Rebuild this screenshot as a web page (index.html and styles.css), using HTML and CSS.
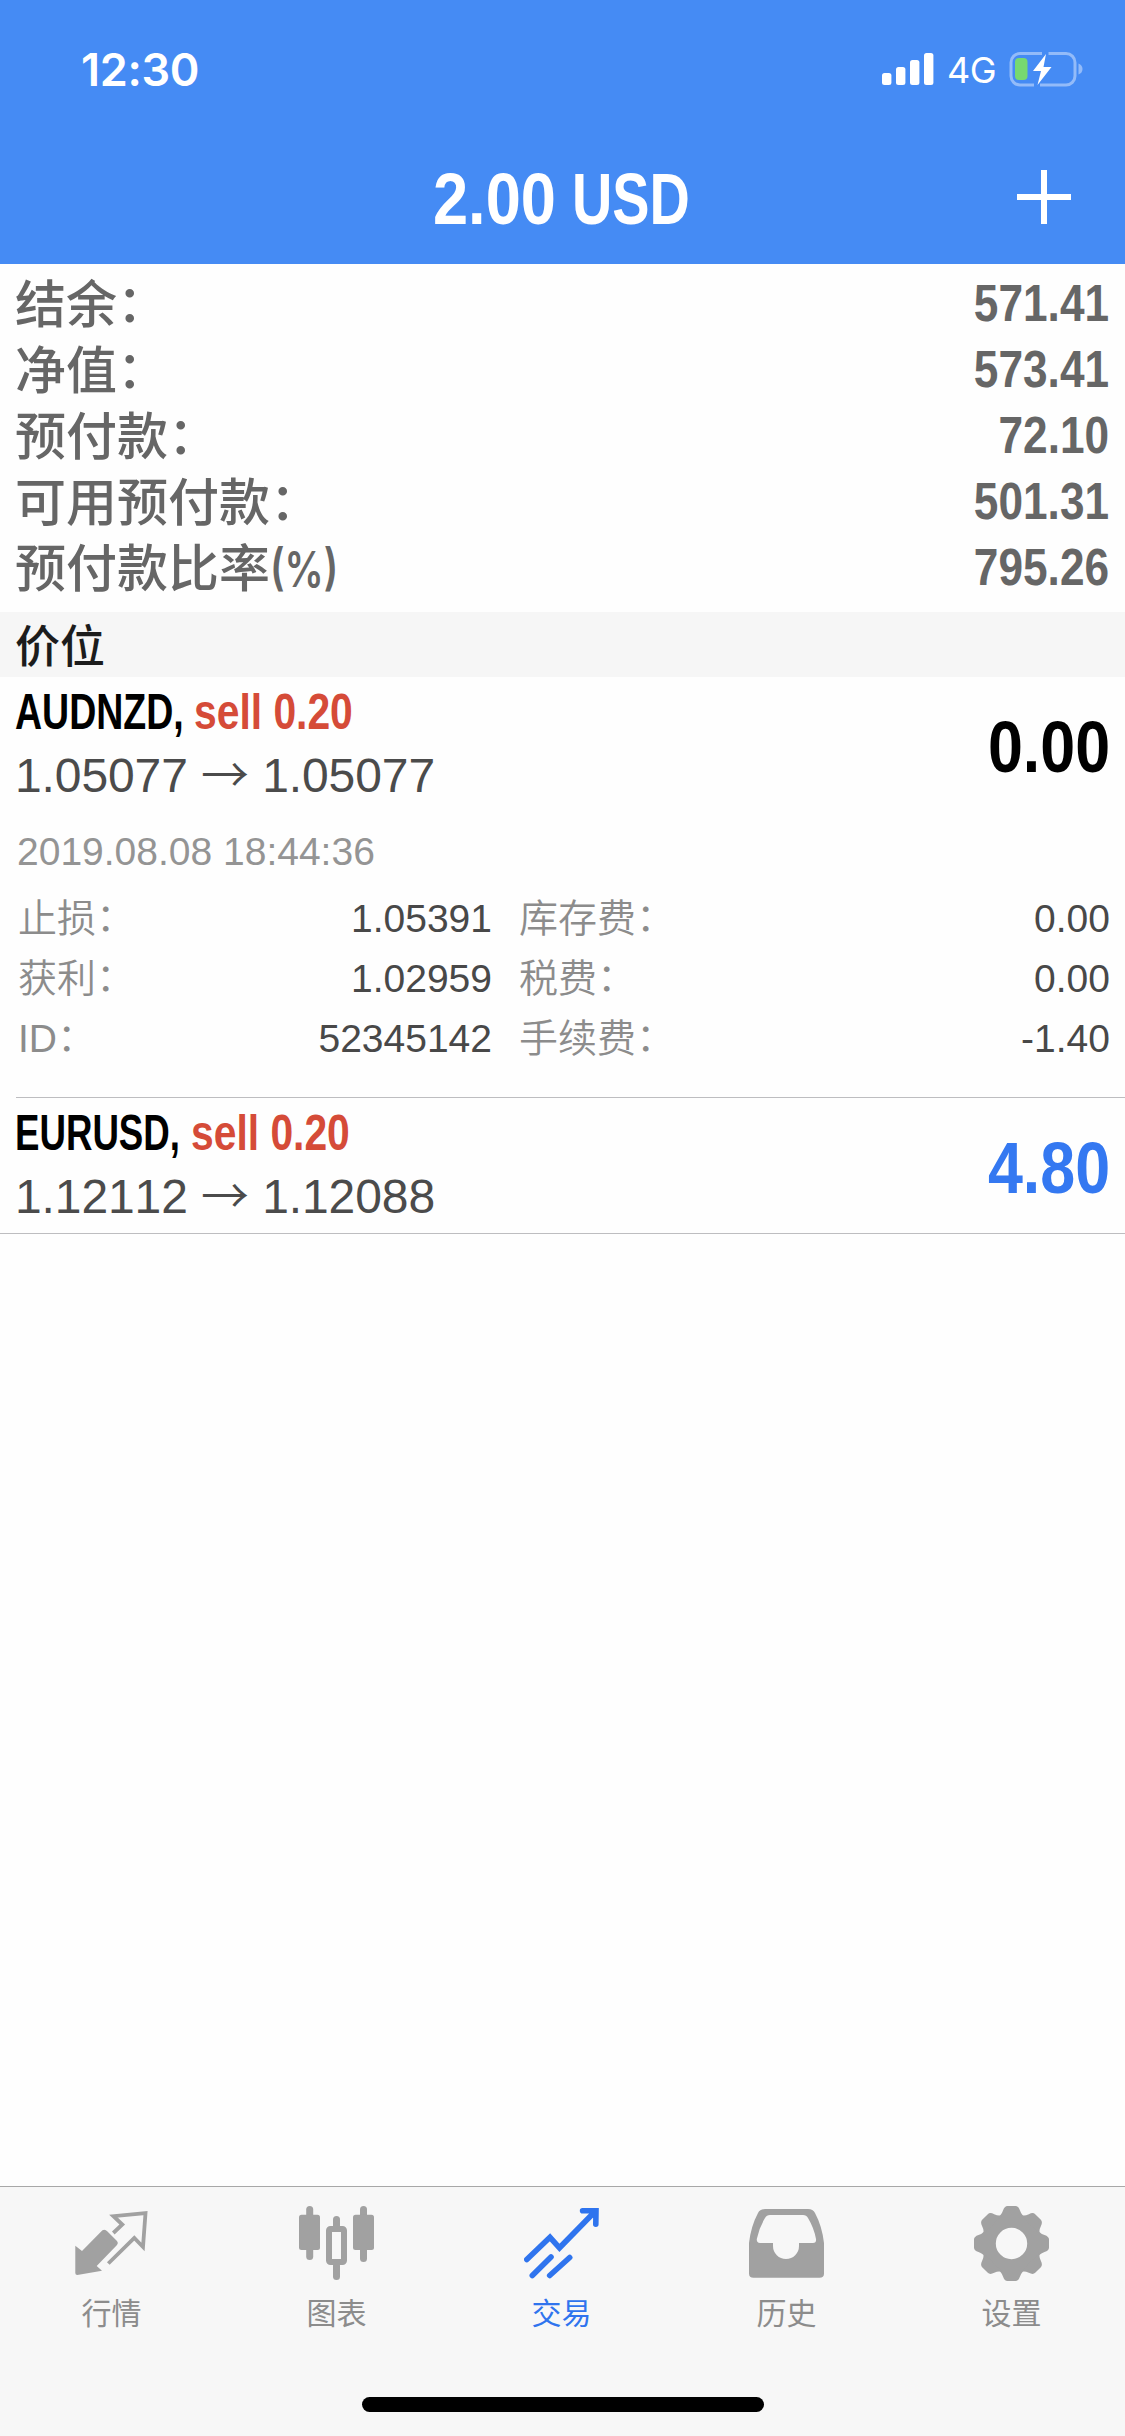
FILE: index.html
```html
<!DOCTYPE html>
<html lang="zh-CN">
<head>
<meta charset="utf-8">
<title>交易</title>
<link rel="stylesheet" href="styles.css">
</head>
<body>
<div class="app">
  <header class="header">
    <div class="status">
      <span class="clock">12:30</span>
      <div class="status-right">
        <svg class="signal" width="52" height="34" viewBox="0 0 52 34" fill="#fff">
          <rect x="0" y="21" width="9.4" height="12" rx="2.5"/>
          <rect x="14" y="15" width="9.4" height="18" rx="2.5"/>
          <rect x="28" y="8" width="9.4" height="25" rx="2.5"/>
          <rect x="42" y="1" width="9.4" height="32" rx="2.5"/>
        </svg>
        <span class="network">4G</span>
        <svg class="battery" width="74" height="36" viewBox="0 0 74 36">
          <g fill="none" stroke="#fff" stroke-opacity=".42" stroke-width="3">
            <path d="M33 2.5H11A9 9 0 0 0 2 11.500V25a9 9 0 0 0 9 9H25"/>
            <path d="M39.500 2.500H57a9 9 0 0 1 9 9V25a9 9 0 0 1-9 9H31"/>
          </g>
          <path d="M69.500 12.500q4 1.500 4 5.500t-4 5.500z" fill="#fff" fill-opacity=".42"/>
          <rect x="6" y="7" width="12.500" height="22" rx="4" fill="#77d970"/>
          <path d="M37 3L24 20H32L28.500 34 42.500 16H34.500Z" fill="#fff"/>
        </svg>
      </div>
    </div>
    <div class="nav">
      <h1 class="title"><span class="amount">2.00</span><span class="currency">USD</span></h1>
      <svg class="add" width="54" height="54" viewBox="0 0 54 54"><path d="M0 27H54M27 0V54" stroke="#fff" stroke-width="6"/></svg>
    </div>
  </header>

  <section class="summary">
    <div class="sum-row"><span class="sum-label">结余<i class="colon">：</i></span><span class="sum-value">571.41</span></div>
    <div class="sum-row"><span class="sum-label">净值<i class="colon">：</i></span><span class="sum-value">573.41</span></div>
    <div class="sum-row"><span class="sum-label">预付款<i class="colon">：</i></span><span class="sum-value">72.10</span></div>
    <div class="sum-row"><span class="sum-label">可用预付款<i class="colon">：</i></span><span class="sum-value">501.31</span></div>
    <div class="sum-row"><span class="sum-label">预付款比率<span class="pct">(%)</span></span><span class="sum-value">795.26</span></div>
  </section>

  <h2 class="section-title">价位</h2>

  <main class="positions">
    <article class="position open">
      <div class="main-row">
        <div>
          <div class="deal"><span class="symbol">AUDNZD,</span><span class="side">sell 0.20</span></div>
          <div class="prices">1.05077 <span class="arrow">→</span> 1.05077</div>
        </div>
        <div class="profit">0.00</div>
      </div>
      <div class="time">2019.08.08 18:44:36</div>
      <div class="details">
        <span class="label">止损<i class="colon">：</i></span><span class="value">1.05391</span><span class="label">库存费<i class="colon">：</i></span><span class="value">0.00</span>
        <span class="label">获利<i class="colon">：</i></span><span class="value">1.02959</span><span class="label">税费<i class="colon">：</i></span><span class="value">0.00</span>
        <span class="label">ID<i class="colon">：</i></span><span class="value">52345142</span><span class="label">手续费<i class="colon">：</i></span><span class="value">-1.40</span>
      </div>
    </article>
    <article class="position compact">
      <div class="main-row">
        <div>
          <div class="deal"><span class="symbol">EURUSD,</span><span class="side">sell 0.20</span></div>
          <div class="prices">1.12112 <span class="arrow">→</span> 1.12088</div>
        </div>
        <div class="profit gain">4.80</div>
      </div>
    </article>
  </main>

  <footer class="footer">
    <nav class="tabs">
      <a class="tab">
        <svg class="icon" viewBox="0 0 75 75">
          <path d="M1.300 39.700L8 45 26.700 26Q30 22 33.500 25.500L43 35Q44.800 37 43 39L22.700 60 28 64.700 3.300 69Q1.300 69 1.300 67Z" fill="currentColor"/>
          <path d="M39.300 27L48.300 18.500 39.500 10.200 71.500 7.200 69 41 60.300 32 34.300 57.500" fill="none" stroke="currentColor" stroke-width="3.800"/>
        </svg>
        <span>行情</span>
      </a>
      <a class="tab">
        <svg class="icon" viewBox="0 0 75 75" fill="currentColor">
          <rect x="7.200" y="0" width="7" height="54" rx="3.500"/><rect x="0" y="8.700" width="21" height="35.300" rx="2.500"/>
          <rect x="61" y="0" width="7" height="56" rx="3.500"/><rect x="54" y="8.700" width="21" height="35.300" rx="2.500"/>
          <rect x="34" y="10" width="7" height="14" rx="3.500"/><rect x="34" y="56" width="7" height="18" rx="3.500"/>
          <rect x="30" y="23" width="15" height="33" rx="1.500" fill="none" stroke="currentColor" stroke-width="6"/>
        </svg>
        <span>图表</span>
      </a>
      <a class="tab active">
        <svg class="icon" viewBox="0 0 75 75" fill="none" stroke="currentColor" stroke-width="5.600" stroke-linecap="round">
          <path d="M2.800 53.500L26 31.300 35.500 41.800 71.500 5M58.600 4.800H72L71.800 18.300M8.300 69.500L27 51M25.700 69.500L45.700 51.500"/>
        </svg>
        <span>交易</span>
      </a>
      <a class="tab">
        <svg class="icon" viewBox="0 0 75 75" fill="currentColor" fill-rule="evenodd">
          <path d="M0 37Q2 20 9 7 11 3 16 3H59Q64 3 66 7 73 20 75 37V67.500Q75 71.800 70.500 71.800H4.500Q0 71.800 0 67.500ZM21 9Q17.500 9 16 12 10 22 7.800 33 7.500 37 11 37H24V40A13 13 0 0 0 50 40V37H64Q67.500 37 67 33 65 22 59 12 57.500 9 54 9Z"/>
        </svg>
        <span>历史</span>
      </a>
      <a class="tab">
        <svg class="icon" viewBox="-37.5 -37.5 75 75" fill="currentColor">
          <defs><path id="tooth" d="M-13-26.500L-11-28.500Q-9.500-30-8.500-33-7-37.500-4-37.500H4Q7-37.500 8.500-33 9.500-30 11-28.500L13-26.500Z"/></defs>
          <circle r="22.500" fill="none" stroke="currentColor" stroke-width="13.600"/>
          <use href="#tooth"/><use href="#tooth" transform="rotate(45)"/><use href="#tooth" transform="rotate(90)"/><use href="#tooth" transform="rotate(135)"/>
          <use href="#tooth" transform="rotate(180)"/><use href="#tooth" transform="rotate(225)"/><use href="#tooth" transform="rotate(270)"/><use href="#tooth" transform="rotate(315)"/>
        </svg>
        <span>设置</span>
      </a>
    </nav>
    <div class="home-indicator"></div>
  </footer>
</div>
</body>
</html>
```
FILE: styles.css
```css
* { box-sizing: border-box; margin: 0; padding: 0; }

body {
  width: 1125px;
  background: #fefefe;
  font-family: "Liberation Sans", "Noto Sans CJK SC", sans-serif;
  font-kerning: none;
}

.app { display: flex; flex-direction: column; height: 2436px; }

/* Header */
.header { height: 264px; background: #458bf4; color: #fff; }
.status {
  display: flex;
  justify-content: space-between;
  height: 132px;
  padding: 41px 42px 0 81px;
  font-family: Inter, sans-serif;
}
.clock { font-size: 45px; font-weight: 600; line-height: 58px; letter-spacing: -0.3px; }
.status-right { display: flex; align-items: flex-start; }
.signal { margin: 11px 13px 0 0; }
.network { width: 50px; margin-right: 12px; font-size: 36px; line-height: 58px; letter-spacing: -0.5px; }
.battery { margin-top: 10px; }

.nav {
  display: grid;
  grid-template-columns: 1fr auto 1fr;
  align-items: start;
  height: 132px;
}
.title {
  grid-column: 2;
  display: flex;
  gap: 14px;
  font-size: 73px;
  line-height: 134px;
}
.title span { transform-origin: left; white-space: nowrap; }
.amount { width: 125px; transform: scaleX(0.865); }
.currency { width: 121px; transform: scaleX(0.765); }
.add { justify-self: end; margin: 38px 54px 0 0; }

/* Account summary */
.summary { height: 348px; padding: 6px 16px 0 15px; color: #666; }
.sum-row { display: flex; justify-content: space-between; height: 66px; }
.sum-label { padding-top: 3px; font-size: 51px; font-weight: 500; line-height: 66px; }
.colon { display: inline-block; font-style: normal; line-height: 1; transform: translateY(-1px); }
.pct {
  display: inline-block;
  font-family: Inter, sans-serif;
  font-size: 50px;
  font-weight: 600;
  line-height: 1;
  transform: scaleX(0.78);
  transform-origin: left;
}
.sum-value {
  font-size: 52px;
  font-weight: 700;
  line-height: 66px;
  transform: scaleX(0.85);
  transform-origin: right;
}

.section-title {
  height: 65px;
  padding-left: 15px;
  background: #f6f6f6;
  color: #1c1c1c;
  font: 500 45px/63px "Noto Sans CJK SC", sans-serif;
}

/* Positions */
.position { padding-left: 16px; border-bottom: 1px solid #bdbdc0; }
.position.open { height: 421px; padding-left: 0; border: 0; }
.position.open::after {
  content: "";
  display: block;
  height: 1px;
  margin: 28px 0 0 16px;
  background: #bdbdc0;
}
.position.open .main-row, .time, .details { margin-left: 16px; }
.main-row { display: flex; justify-content: space-between; height: 135px; padding-right: 15px; }
.deal {
  height: 64px;
  margin-left: -1px;
  font-size: 50px;
  font-weight: 700;
  line-height: 71px;
  white-space: nowrap;
}
.symbol, .side { display: inline-block; transform-origin: left; }
.symbol { width: 179px; color: #000; transform: scaleX(0.75); }
.compact .symbol { width: 176px; transform: scaleX(0.733); }
.side { color: #d54b38; transform: scaleX(0.816); }
.prices {
  margin-left: -1px;
  color: #4b4b4b;
  font-size: 48px;
  letter-spacing: -0.1px;
  line-height: 70px;
  white-space: nowrap;
}
.arrow { font-family: "Noto Sans CJK SC", sans-serif; font-weight: 350; line-height: 1; }
.profit {
  color: #000;
  font-size: 73px;
  font-weight: 700;
  line-height: 139px;
  transform: scaleX(0.86);
  transform-origin: right;
}
.profit.gain { color: #3478f1; }

.time { height: 60px; padding-left: 1px; color: #949494; font-size: 39px; line-height: 79px; }
.details {
  display: grid;
  grid-template-columns: 240px 235px 240px 1fr;
  grid-auto-rows: 60px;
  padding: 17px 15px 0 2px;
  font-size: 39px;
  line-height: 60px;
}
.label { color: #8c8c8c; font-weight: 350; }
.value { color: #484848; text-align: right; }
.value:nth-child(4n + 2) { padding-right: 1px; }
.label:nth-child(4n + 3) { padding-left: 26px; }

/* Tab bar */
.footer {
  height: 250px;
  margin-top: auto;
  border-top: 1px solid #a8a8a8;
  background: #f7f7f7;
}
.tabs { display: grid; grid-template-columns: repeat(5, 225px); margin-left: -1px; height: 205px; padding-top: 19px; }
.tab {
  display: flex;
  flex-direction: column;
  align-items: center;
  color: #a1a1a1;
  font: 400 30px/44px "Noto Sans CJK SC", sans-serif;
}
.tab span { margin-top: 8px; color: #8c8c8c; }
.icon { width: 75px; height: 75px; }
.tab.active, .tab.active span { color: #2f74ee; }
.home-indicator { width: 402px; height: 15px; margin: 5px auto 0; border-radius: 8px; background: #000; }
```
